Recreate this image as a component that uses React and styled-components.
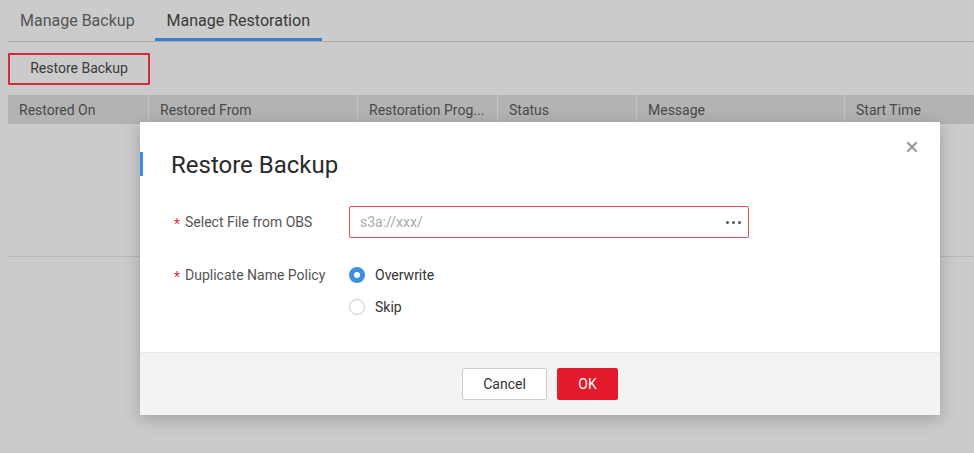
import React, { useState } from 'react';
import styled, { createGlobalStyle } from 'styled-components';

const GlobalStyle = createGlobalStyle`
  html, body {
    margin: 0;
    padding: 0;
    background: #cbcbcb;
    font-family: Roboto, "Liberation Sans", Arial, sans-serif;
  }
`;

const columns = [
  { title: 'Restored On', width: 140 },
  { title: 'Restored From', width: 209 },
  { title: 'Restoration Prog...', width: 140 },
  { title: 'Status', width: 139 },
  { title: 'Message', width: 208 },
  { title: 'Start Time', width: 130 },
];

const Page = styled.div`
  position: relative;
  width: 974px;
  height: 453px;
  overflow: hidden;
  padding: 0 0 0 8px;
  box-sizing: border-box;
`;

const Tabs = styled.div`
  display: flex;
  height: 41px;
  border-bottom: 1px solid #a9a9a9;
`;

const Tab = styled.div`
  padding: 0 12px 0 12px;
  margin-right: ${p => (p.active ? 0 : '8px')};
  height: 41px;
  box-sizing: border-box;
  display: flex;
  align-items: center;
  font-size: 16px;
  color: ${p => (p.active ? '#3a3a3a' : '#555')};
  border-bottom: 3px solid ${p => (p.active ? '#3b7fcb' : 'transparent')};
  padding-top: 3px;
`;

const Toolbar = styled.div`
  padding-top: 11px;
  height: 43px;
  box-sizing: border-box;
`;

const OutlineButton = styled.button`
  width: 142px;
  height: 32px;
  background: transparent;
  border: 2px solid #d42a3a;
  border-radius: 1px;
  font-family: inherit;
  font-size: 14px;
  color: #3a3a3a;
  padding: 0 0 2px;
`;

const Table = styled.div`
  margin-top: 10px;
  border-bottom: 1px solid #b8b8b8;
  height: 161px;
`;

const HeadRow = styled.div`
  display: flex;
  height: 29px;
  background: #b3b3b3;
`;

const HeadCell = styled.div`
  flex: 0 0 ${p => p.w}px;
  box-sizing: border-box;
  padding-left: 11px;
  display: flex;
  align-items: center;
  font-size: 14px;
  color: #4a4a4a;
  border-left: ${p => (p.first ? 'none' : '1px solid #c4c4c4')};
  white-space: nowrap;
`;

const Dialog = styled.div`
  position: absolute;
  left: 140px;
  top: 122px;
  width: 800px;
  height: 293px;
  background: #fff;
  box-shadow: 0 4px 16px rgba(0, 0, 0, 0.22);
  display: flex;
  flex-direction: column;
`;

const Header = styled.div`
  position: relative;
  padding: 27px 0 0 31px;
  height: 58px;
  box-sizing: border-box;
`;

const Title = styled.h2`
  margin: 0;
  font-size: 24px;
  font-weight: 400;
  line-height: 32px;
  color: #2a2a2a;
  &::before {
    content: '';
    position: absolute;
    left: 0;
    top: 30px;
    width: 3px;
    height: 24px;
    background: #3b8ee0;
  }
`;

const Close = styled.span`
  position: absolute;
  right: 22px;
  top: 19px;
  width: 12px;
  height: 12px;
  display: flex;
`;

const Body = styled.div`
  flex: 1;
  padding: 26px 0 0 34px;
`;

const FormRow = styled.div`
  display: flex;
  align-items: flex-start;
  margin-bottom: ${p => p.gap || 0}px;
`;

const Label = styled.div`
  width: 175px;
  font-size: 14px;
  color: #555;
  line-height: 32px;
  white-space: nowrap;
  &::before {
    content: '*';
    color: #e0323c;
    margin-right: 5px;
    font-size: 14px;
    position: relative;
    top: 2px;
  }
`;

const InputBox = styled.div`
  width: 400px;
  height: 32px;
  box-sizing: border-box;
  border: 1px solid #dc4a55;
  border-radius: 2px;
  display: flex;
  align-items: center;
  justify-content: space-between;
  padding: 0 4px 0 10px;
  font-size: 14px;
  color: #aaa;
`;

const Dots = styled.span`
  display: flex;
  gap: 3px;
  margin-right: 3px;
  span {
    width: 3px;
    height: 3px;
    border-radius: 50%;
    background: #555;
  }
`;

const RadioGroup = styled.div`
  display: flex;
  flex-direction: column;
`;

const RadioItem = styled.label`
  display: flex;
  align-items: center;
  height: 32px;
  font-size: 14px;
  color: #333;
  cursor: pointer;
`;

const RadioDot = styled.span`
  width: 16px;
  height: 16px;
  box-sizing: border-box;
  border-radius: 50%;
  margin-right: 10px;
  border: ${p => (p.checked ? '5px solid #3b8ee0' : '1px solid #c8c8c8')};
  background: #fff;
`;

const Footer = styled.div`
  height: 63px;
  background: #f3f3f3;
  border-top: 1px solid #e8e8e8;
  box-sizing: border-box;
  display: flex;
  align-items: center;
  justify-content: center;
  gap: 10px;
`;

const FooterButton = styled.button`
  height: 32px;
  width: ${p => p.w}px;
  font-family: inherit;
  font-size: 14px;
  border-radius: 2px;
  border: 1px solid ${p => (p.primary ? '#e3192c' : '#ccc')};
  background: ${p => (p.primary ? '#e3192c' : '#fff')};
  color: ${p => (p.primary ? '#fff' : '#333')};
  padding: 0;
`;

export default function App() {
  const [policy, setPolicy] = useState('overwrite');

  return (
    <>
      <GlobalStyle />
      <Page>
        <Tabs>
          <Tab>Manage Backup</Tab>
          <Tab active>Manage Restoration</Tab>
        </Tabs>
        <Toolbar>
          <OutlineButton>Restore Backup</OutlineButton>
        </Toolbar>
        <Table>
          <HeadRow>
            {columns.map((c, i) => (
              <HeadCell key={c.title} w={c.width} first={i === 0}>{c.title}</HeadCell>
            ))}
          </HeadRow>
        </Table>

        <Dialog>
          <Header>
            <Title>Restore Backup</Title>
            <Close>
              <svg width="12" height="12" viewBox="0 0 12 12">
                <path d="M2 2 L10 10 M10 2 L2 10" stroke="#9a9a9a" strokeWidth="2.2" strokeLinecap="round" />
              </svg>
            </Close>
          </Header>
          <Body>
            <FormRow gap={21}>
              <Label>Select File from OBS</Label>
              <InputBox>
                s3a://xxx/
                <Dots><span /><span /><span /></Dots>
              </InputBox>
            </FormRow>
            <FormRow>
              <Label>Duplicate Name Policy</Label>
              <RadioGroup>
                <RadioItem onClick={() => setPolicy('overwrite')}>
                  <RadioDot checked={policy === 'overwrite'} />Overwrite
                </RadioItem>
                <RadioItem onClick={() => setPolicy('skip')}>
                  <RadioDot checked={policy === 'skip'} />Skip
                </RadioItem>
              </RadioGroup>
            </FormRow>
          </Body>
          <Footer>
            <FooterButton w={85}>Cancel</FooterButton>
            <FooterButton w={61} primary>OK</FooterButton>
          </Footer>
        </Dialog>
      </Page>
    </>
  );
}
